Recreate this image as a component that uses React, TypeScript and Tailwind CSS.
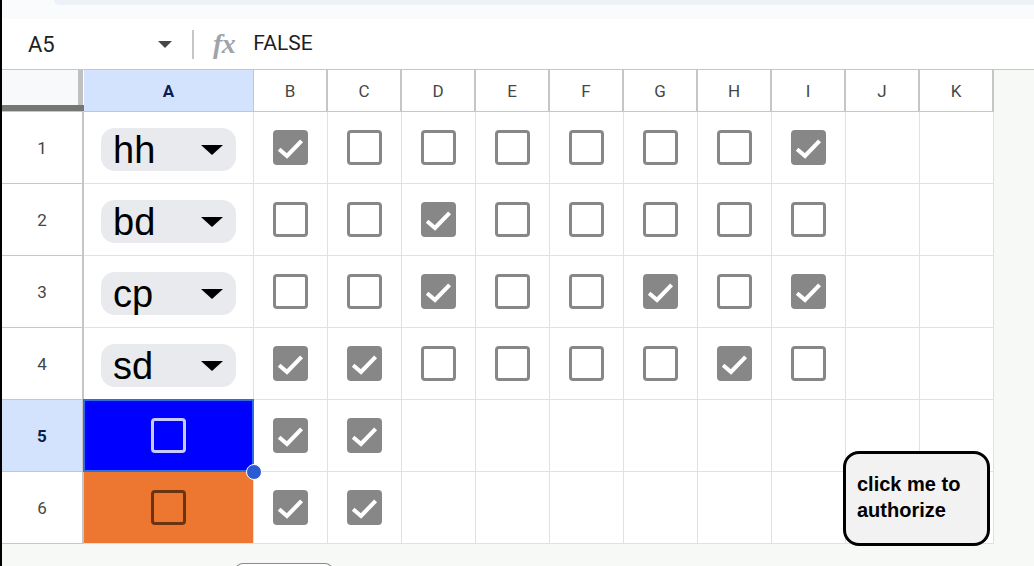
const COLS = ['B', 'C', 'D', 'E', 'F', 'G', 'H', 'I', 'J', 'K'];

const ROWS: { label: string; checks: (boolean | null)[] }[] = [
  { label: 'hh', checks: [true, false, false, false, false, false, false, true] },
  { label: 'bd', checks: [false, false, true, false, false, false, false, false] },
  { label: 'cp', checks: [false, false, true, false, false, true, false, true] },
  { label: 'sd', checks: [true, true, false, false, false, false, true, false] },
];

function Check({ on, border = 'border-[#878787]' }: { on: boolean; border?: string }) {
  if (on) {
    return (
      <div className="w-[35px] h-[35px] rounded-[4px] bg-[#878787] flex items-center justify-center">
        <svg viewBox="0 0 24 24" className="w-[35px] h-[35px]">
          <polyline points="4.2,13.2 9.6,17.8 19.6,7.4" fill="none" stroke="#fff" strokeWidth="2.8" />
        </svg>
      </div>
    );
  }
  return <div className={`w-[35px] h-[35px] rounded-[4px] border-[3.5px] ${border}`}></div>;
}

function Chip({ text }: { text: string }) {
  return (
    <div className="mt-[4px] w-[135px] h-[43px] rounded-[14px] bg-[#e8eaed] flex items-center justify-between pl-[12px] pr-[13px]">
      <span className="text-[38px] leading-[38px] text-black font-['Liberation_Sans',Arial,sans-serif]">{text}</span>
      <svg viewBox="0 0 22 10" className="w-[22px] h-[10px]">
        <polygon points="0,0 22,0 11,10" fill="#000" />
      </svg>
    </div>
  );
}

function RowHead({ n, active = false }: { n: number; active?: boolean }) {
  return (
    <div
      className={`w-[82px] h-[72px] shrink-0 border-r-2 border-b border-[#c4c7c5] flex items-center justify-center pt-[2px] text-[17px] font-['Roboto',sans-serif] ${
        active ? 'bg-[#d3e3fd] text-[#0b1f4f] font-bold' : 'bg-white text-[#444746]'
      }`}
    >
      {n}
    </div>
  );
}

function Cell({ children }: { children?: React.ReactNode }) {
  return (
    <div className="w-[74px] h-[72px] shrink-0 border-r border-b border-[#e1e1e1] flex items-center justify-center">
      {children}
    </div>
  );
}

export default function App() {
  return (
    <div className="relative w-[1034px] h-[566px] overflow-hidden border-l-2 border-black bg-[#f7f9f6] font-['Roboto',sans-serif]">
      {/* top strip */}
      <div className="h-[19px] bg-[#f9fbfd]">
        <div className="ml-[52px] h-[5px] bg-[#edf1f8] rounded-bl-[14px]"></div>
      </div>

      {/* formula bar */}
      <div className="h-[50px] bg-white flex items-center">
        <div className="w-[190px] pl-[26px] pr-[20px] flex items-center justify-between">
          <span className="text-[22px] text-[#1f1f1f]">A5</span>
          <svg viewBox="0 0 14 7" className="w-[14px] h-[7px]">
            <polygon points="0,0 14,0 7,7" fill="#444746" />
          </svg>
        </div>
        <div className="w-[2px] h-[29px] bg-[#c4c7c5]"></div>
        <span className="ml-[19px] text-[28px] leading-none italic font-bold text-[#a0a4a8] font-['Liberation_Serif',serif] tracking-[-0.5px]">
          fx
        </span>
        <span className="ml-[18px] text-[21px] text-[#1f1f1f]">FALSE</span>
      </div>

      {/* column headers */}
      <div className="flex h-[43px] border-t border-[#c4c7c5]">
        <div className="w-[82px] h-[42px] shrink-0 flex flex-col border-b border-[#c4c7c5]">
          <div className="flex flex-1">
            <div className="flex-1 bg-[#f8f9fa]"></div>
            <div className="w-[5px] bg-[#c0c0c0]"></div>
            <div className="w-[1px] bg-white"></div>
          </div>
          <div className="h-[6px] bg-[#757775]"></div>
        </div>
        <div className="w-[170px] h-[42px] shrink-0 bg-[#d3e3fd] border-r border-b border-[#c4c7c5] flex items-center justify-center pt-[2px] text-[17px] font-bold text-[#0b1f4f]">
          A
        </div>
        {COLS.map((c) => (
          <div
            key={c}
            className="w-[74px] h-[42px] shrink-0 bg-white border-r-2 border-b border-[#c4c7c5] flex items-center justify-center pt-[2px] text-[17px] text-[#444746]"
          >
            {c}
          </div>
        ))}
      </div>

      {/* data rows */}
      {ROWS.map((r, i) => (
        <div key={r.label} className="flex bg-white w-[992px]">
          <RowHead n={i + 1} />
          <div className="w-[170px] h-[72px] shrink-0 border-r border-b border-[#e1e1e1] flex items-center justify-center">
            <Chip text={r.label} />
          </div>
          {COLS.map((c, j) => (
            <Cell key={c}>{j < r.checks.length ? <Check on={!!r.checks[j]} /> : null}</Cell>
          ))}
        </div>
      ))}

      {/* row 5 (selected) */}
      <div className="flex bg-white w-[992px]">
        <RowHead n={5} active />
        <div className="relative w-[170px] h-[72px] shrink-0 border-r border-b border-[#e1e1e1] bg-[#0000ff] flex items-center justify-center">
          <Check on={false} border="border-[#c9c9ff]" />
          <div className="absolute -top-[1px] -left-[1px] -right-[1px] -bottom-[1px] border-[2.5px] border-[#2d6fe3]"></div>
          <div className="absolute -right-[9px] -bottom-[9px] w-[16px] h-[16px] rounded-full bg-[#2a5bd0] border-[1.5px] border-white z-10"></div>
        </div>
        {COLS.map((c, j) => (
          <Cell key={c}>{j < 2 ? <Check on /> : null}</Cell>
        ))}
      </div>

      {/* row 6 */}
      <div className="flex bg-white w-[992px]">
        <RowHead n={6} />
        <div className="w-[170px] h-[72px] shrink-0 border-r border-b border-[#e1e1e1] bg-[#ed7731] flex items-center justify-center">
          <Check on={false} border="border-[#6b3410]" />
        </div>
        {COLS.map((c, j) => (
          <Cell key={c}>{j < 2 ? <Check on /> : null}</Cell>
        ))}
      </div>

      {/* bottom bar with sheet tab peeking */}
      <div className="pl-[233px] pt-[19px]">
        <div className="w-[98px] h-[8px] rounded-t-[8px] border border-[#8a8d8b] bg-white"></div>
      </div>

      {/* drawing button over the grid */}
      <button className="absolute left-[841px] top-[451px] w-[147px] h-[95px] rounded-[16px] border-[3px] border-black bg-[#f2f2f2] flex items-center pl-[11px] pb-[3px] text-left">
        <span className="text-[20px] leading-[26px] font-bold text-black font-['Liberation_Sans',Arial,sans-serif]">
          click me to
          <br />
          authorize
        </span>
      </button>
    </div>
  );
}
